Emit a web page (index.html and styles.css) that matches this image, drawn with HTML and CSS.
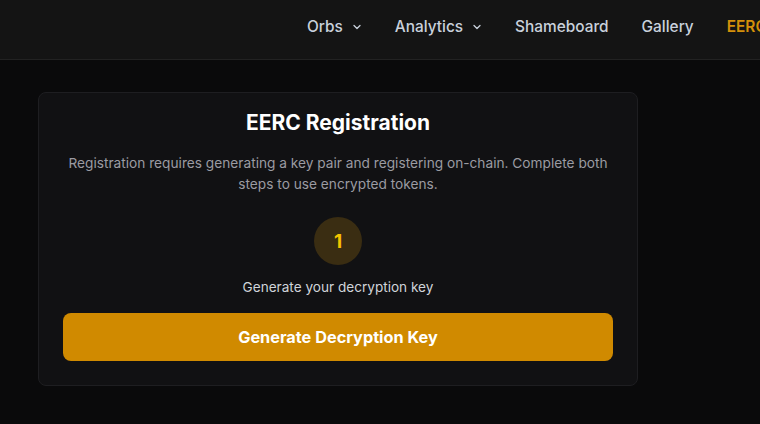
FILE: index.html
```html
<!DOCTYPE html>
<html lang="en">
<head>
  <meta charset="UTF-8">
  <meta name="viewport" content="width=device-width, initial-scale=1.0">
  <title>EERC Registration</title>
  <link rel="stylesheet" href="styles.css">
</head>
<body>
  <header class="topbar">
    <nav class="nav">
      <a class="nav-item">Orbs
        <svg class="chev" viewBox="0 0 10 10" width="10" height="10"><path d="M2 3.5 L5 6.5 L8 3.5" fill="none" stroke="currentColor" stroke-width="1.3" stroke-linecap="round" stroke-linejoin="round"/></svg>
      </a>
      <a class="nav-item">Analytics
        <svg class="chev" viewBox="0 0 10 10" width="10" height="10"><path d="M2 3.5 L5 6.5 L8 3.5" fill="none" stroke="currentColor" stroke-width="1.3" stroke-linecap="round" stroke-linejoin="round"/></svg>
      </a>
      <a class="nav-item">Shameboard</a>
      <a class="nav-item">Gallery</a>
      <a class="nav-item active">EERC</a>
    </nav>
  </header>

  <main class="content">
    <div class="card">
      <h2>EERC Registration</h2>
      <p class="desc">Registration requires generating a key pair and registering on-chain. Complete both steps to use encrypted tokens.</p>
      <div class="step">
        <div class="step-num">1</div>
        <div class="step-label">Generate your decryption key</div>
      </div>
      <button class="primary">Generate Decryption Key</button>
    </div>
  </main>
</body>
</html>
```

FILE: styles.css
```css
body {
  margin: 0;
  background: #0a0a0b;
  font-family: Inter, "Noto Sans", sans-serif;
  color: #fff;
  overflow: hidden;
}
.topbar {
  height: 52px;
  padding: 0 0 7px 307px;
  background: #141414;
  border-bottom: 1px solid #222;
  display: flex;
  align-items: center;
  white-space: nowrap;
}
.nav {
  display: flex;
  align-items: center;
  gap: 33px;
}
.nav-item {
  color: #c9d1dc;
  font-size: 15.4px;
  font-weight: 500;
  display: flex;
  align-items: center;
  gap: 9px;
  cursor: pointer;
}
.nav-item.active {
  color: #d4900a;
  font-weight: 600;
}
.chev {
  margin-top: 1px;
}
.content {
  padding: 32px 38px;
}
.card {
  width: 550px;
  background: #111113;
  border: 1px solid #1e1e21;
  border-radius: 8px;
  padding: 16px 24px 24px;
  text-align: center;
}
.card h2 {
  margin: 0;
  font-size: 21px;
  font-weight: 700;
  line-height: 28px;
}
.desc {
  margin: 16px 0 0;
  padding: 0 4px;
  font-size: 13.7px;
  line-height: 21px;
  color: #9b9ba2;
}
.step {
  margin-top: 22px;
  display: flex;
  flex-direction: column;
  align-items: center;
}
.step-num {
  width: 48px;
  height: 48px;
  border-radius: 50%;
  background: #3a2d12;
  color: #f5c400;
  font-weight: 700;
  font-size: 19px;
  display: flex;
  align-items: center;
  justify-content: center;
}
.step-label {
  margin-top: 12px;
  font-size: 13.6px;
  line-height: 20px;
  color: #d0d4da;
}
.primary {
  margin-top: 16px;
  width: 100%;
  height: 48px;
  border: none;
  border-radius: 8px;
  background: #d08a00;
  color: #fff;
  font-family: inherit;
  font-size: 16.3px;
  font-weight: 700;
  cursor: pointer;
}
```
